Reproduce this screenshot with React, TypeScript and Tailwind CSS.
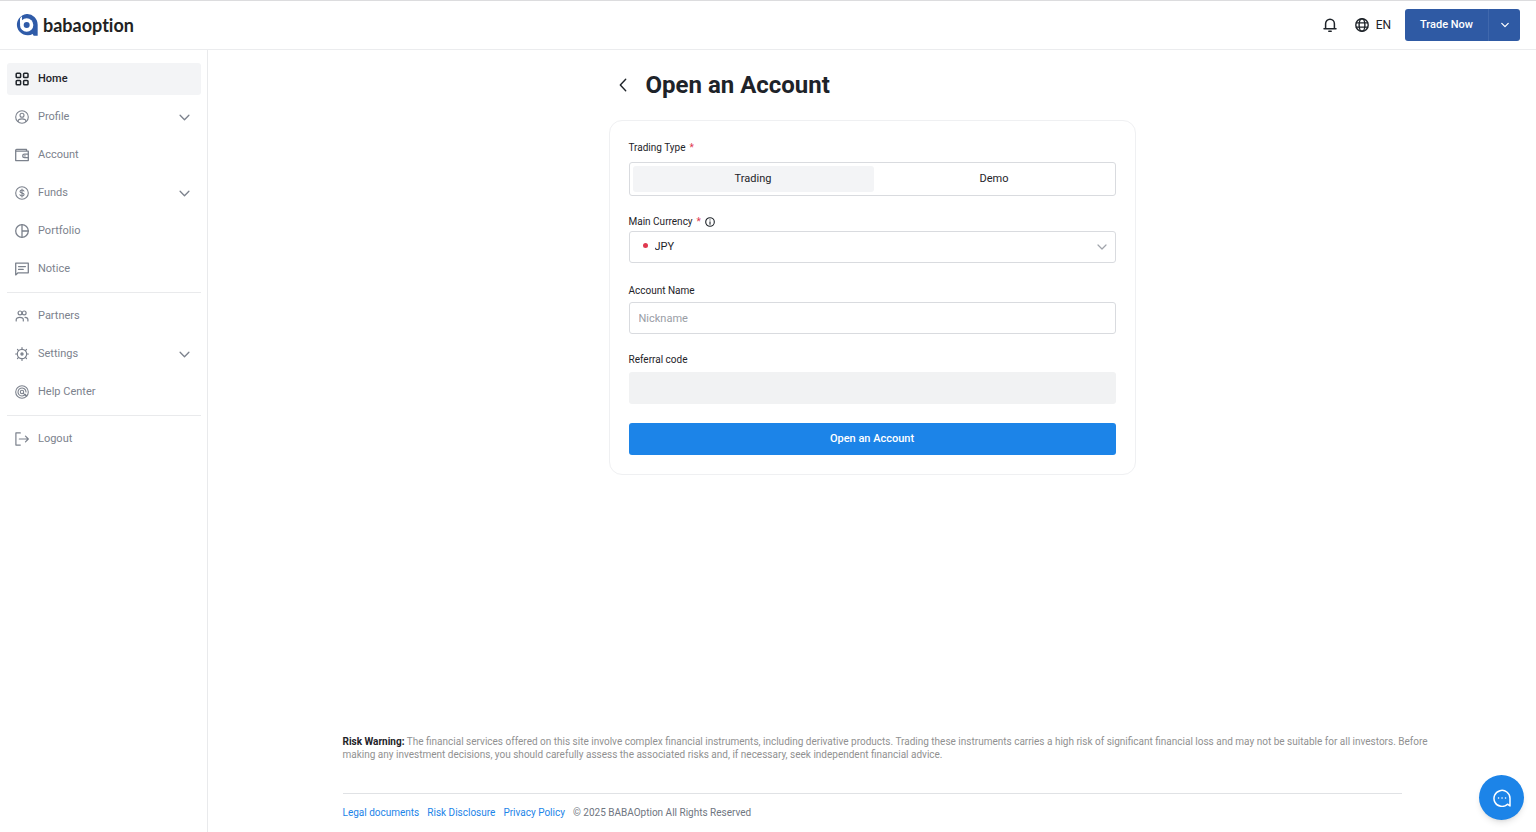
import { useState } from 'react';
import type { ReactNode } from 'react';
import { clsx } from 'clsx';

type IconProps = { children: ReactNode; size?: string; box?: string; width?: number };

function Icon({ children, size = 'size-3.5', box = '0 0 14 14', width = 1.1 }: IconProps) {
  return (
    <svg
      className={clsx(size, 'shrink-0')}
      viewBox={box}
      fill="none"
      stroke="currentColor"
      strokeWidth={width}
      strokeLinecap="round"
      strokeLinejoin="round"
      aria-hidden="true"
    >
      {children}
    </svg>
  );
}

const icons = {
  home: (
    <Icon width={1.5}>
      <rect x="1.2" y="1.2" width="4.4" height="4.4" rx="0.9" />
      <rect x="8.6" y="1.2" width="4.4" height="4.4" rx="0.9" />
      <rect x="1.2" y="8.4" width="4.4" height="4.4" rx="0.9" />
      <rect x="8.6" y="8.4" width="4.4" height="4.4" rx="0.9" />
    </Icon>
  ),
  profile: (
    <Icon>
      <circle cx="7" cy="7" r="6.3" />
      <circle cx="7" cy="5.3" r="2" />
      <path d="M3.2 11.6V11c0-1.4 1.4-2.1 3.8-2.1s3.8.7 3.8 2.1v.6" />
    </Icon>
  ),
  account: (
    <Icon width={1.3}>
      <path d="M11.5 3.2V1.4H1.6a.9.9 0 0 0 0 1.8h11.7v9.4H.7V2.3" />
      <path d="M13.3 6.1H9.5a1.8 1.8 0 0 0 0 3.6h3.8M9.7 7.9h.4" />
    </Icon>
  ),
  funds: (
    <Icon>
      <circle cx="7" cy="7" r="6.3" />
      <path d="M9 5.1C8.7 4.4 8 4 7 4c-1.2 0-2 .5-2 1.4C5 7.5 9.1 6.4 9.1 8.6 9.1 9.5 8.200 10 7 10c-1.1 0-1.9-.5-2.1-1.300M7 3v8" />
    </Icon>
  ),
  portfolio: (
    <Icon width={1.3}>
      <circle cx="7" cy="7" r="6.3" />
      <path d="M7 .7v12.6M7 7h6.3" />
    </Icon>
  ),
  notice: (
    <Icon width={1.3}>
      <path d="M.7 1.2h12.6v9.6H3L.7 12.9z" />
      <path d="M3.6 4.6h6.8M3.6 7.4h4.6" />
    </Icon>
  ),
  partners: (
    <Icon width={1.2}>
      <circle cx="5" cy="3.9" r="1.9" />
      <circle cx="9.2" cy="3.9" r="1.9" />
      <path d="M1.2 12v-1.400c0-1.300 1.300-2.200 3.500-2.200s3.600.9 3.600 2.200V12M10 8.400c1.800.1 2.900 1 2.900 2.200V12" />
    </Icon>
  ),
  settings: (
    <Icon width={1.2}>
      <circle cx="7" cy="7" r="4.7" />
      <circle cx="7" cy="7" r="1.1" fill="currentColor" />
      <path d="M7 .6v1.6M7 11.8v1.6M.6 7h1.6M11.8 7h1.6M2.500 2.500l1.100 1.100M10.400 10.400l1.100 1.100M2.500 11.500l1.100-1.100M10.400 3.600l1.100-1.100" />
    </Icon>
  ),
  help: (
    <Icon>
      <circle cx="7" cy="7" r="6.3" />
      <path d="M10.300 9.300A4 4 0 1 1 11 7M10.300 9.300l1.400 1.700" />
      <circle cx="7" cy="7" r="1.7" />
      <path d="M8.200 8.200l2.700 2.700" />
    </Icon>
  ),
  logout: (
    <Icon width={1.2}>
      <path d="M5.300.9H.9v12.2h4.400M4.300 7h9M10.500 4.200L13.300 7l-2.800 2.800" />
    </Icon>
  ),
};

type NavItem = { label: string; icon: ReactNode; expandable?: boolean; active?: boolean };

const navGroups: NavItem[][] = [
  [
    { label: 'Home', icon: icons.home, active: true },
    { label: 'Profile', icon: icons.profile, expandable: true },
    { label: 'Account', icon: icons.account },
    { label: 'Funds', icon: icons.funds, expandable: true },
    { label: 'Portfolio', icon: icons.portfolio },
    { label: 'Notice', icon: icons.notice },
  ],
  [
    { label: 'Partners', icon: icons.partners },
    { label: 'Settings', icon: icons.settings, expandable: true },
    { label: 'Help Center', icon: icons.help },
  ],
  [{ label: 'Logout', icon: icons.logout }],
];

const legalLinks = ['Legal documents', 'Risk Disclosure', 'Privacy Policy'];

function Chevron({ size, width = 1.2 }: { size: string; width?: number }) {
  return (
    <Icon size={size} box="0 0 10 10" width={width}>
      <path d="M1 3l4 4 4-4" />
    </Icon>
  );
}

function Logo() {
  return (
    <a href="#" className="flex items-center gap-[5px]">
      <svg className="size-[22px]" viewBox="0 0 66 66" aria-hidden="true">
        <path d="M32 0a32 32 0 0 1 33 32v33H53l-3-5A32 32 0 1 1 32 0z" fill="#2f5ba8" />
        <circle cx="32" cy="33" r="20" fill="#fff" />
        <path d="M12 33V13l6-6v16z" fill="#fff" />
        <circle cx="32" cy="33" r="9" fill="#2f5ba8" />
      </svg>
      <span className="font-['Lato'] text-lg leading-6 font-bold text-[#222] [font-variant-ligatures:none]">
        babaoption
      </span>
    </a>
  );
}

function Header() {
  return (
    <header className="flex h-[50px] items-center justify-between border-y border-t-[#dcdcde] border-b-[#ebecee] px-4">
      <Logo />
      <div className="flex items-center">
        <button type="button" aria-label="Notifications" className="mr-[18px]">
          <Icon width={1.5}>
            <path d="M1 10.700h12M2.600 10.700V5.700a4.400 4.400 0 0 1 8.800 0v5M5.800 13.200h2.400" />
          </Icon>
        </button>
        <button type="button" className="mr-3.5 flex items-center gap-[7px] text-xs">
          <Icon width={1.4}>
            <circle cx="7" cy="7" r="6.200" />
            <ellipse cx="7" cy="7" rx="2.900" ry="6.200" />
            <path d="M1.300 4.900h11.400M1.300 9.100h11.400" />
          </Icon>
          EN
        </button>
        <div className="flex h-8 overflow-hidden rounded-[3px] bg-[#2f5aa4] text-[11px] font-medium text-white">
          <button type="button" className="border-r border-[#4068ad] px-[15px]">Trade Now</button>
          <button type="button" aria-label="More trading options" className="flex w-[31px] items-center justify-center">
            <Chevron size="size-2" width={1.6} />
          </button>
        </div>
      </div>
    </header>
  );
}

function Sidebar() {
  return (
    <aside className="w-52 shrink-0 border-r border-[#e9eaec] pt-[13px] pr-1.5 pl-[7px]">
      <nav className="flex flex-col divide-y divide-[#e9eaec]">
        {navGroups.map((group, idx) => (
          <ul key={idx} className="flex flex-col gap-1.5 py-[7px] first:pt-0">
            {group.map((item) => (
              <li key={item.label}>
                <a
                  href="#"
                  className={clsx(
                    'flex h-8 items-center gap-[9px] rounded-[3px] pr-[11px] pl-2 text-[11px]',
                    item.active ? 'bg-[#f3f4f6] font-medium text-[#1e2329]' : 'text-[#7c828d]',
                  )}
                >
                  {item.icon}
                  <span className="flex-1">{item.label}</span>
                  {item.expandable && <Chevron size="size-[11px]" />}
                </a>
              </li>
            ))}
          </ul>
        ))}
      </nav>
    </aside>
  );
}

function Required() {
  return <span className="ml-1 text-[#e0394f]">*</span>;
}

function AccountForm() {
  const [type, setType] = useState('Trading');
  const [nickname, setNickname] = useState('');

  return (
    <form
      className="rounded-[13px] border border-[#eff0f2] px-[19px] pt-5 pb-[19px] text-[11px]"
      onSubmit={(e) => e.preventDefault()}
    >
      <fieldset>
        <legend className="text-[10px] leading-[14px]">Trading Type<Required /></legend>
        <div className="mt-[7px] flex h-[34px] rounded-[3px] border border-[#d9dbdf] py-[3px] pl-[3px]">
          {['Trading', 'Demo'].map((option) => (
            <label
              key={option}
              className={clsx(
                'flex flex-1 cursor-pointer items-center justify-center rounded-[3px]',
                type === option && 'bg-[#f3f4f6]',
              )}
            >
              <input
                type="radio"
                name="type"
                className="sr-only"
                checked={type === option}
                onChange={() => setType(option)}
              />
              {option}
            </label>
          ))}
        </div>
      </fieldset>

      <div className="mt-[19px] flex items-center text-[10px] leading-[14px]">
        <label htmlFor="currency">Main Currency<Required /></label>
        <span className="ml-1">
          <Icon size="size-2.5" box="0 0 10 10">
            <circle cx="5" cy="5" r="4.300" />
            <path d="M5 4.700v2.500M5 2.900v.1" />
          </Icon>
        </span>
      </div>
      <div className="relative mt-0.5">
        <select
          id="currency"
          className="h-8 w-full appearance-none rounded-[3px] border border-[#d9dbdf] bg-white pl-[25px]"
        >
          <option>JPY</option>
        </select>
        <span className="pointer-events-none absolute top-3 left-3.5 size-[5px] rounded-full bg-[#e0394f]" />
        <span className="pointer-events-none absolute top-[11px] right-[9px] text-[#a0a4ab]">
          <Chevron size="size-2.5" />
        </span>
      </div>

      <label htmlFor="nickname" className="mt-[21px] block text-[10px] leading-[14px]">Account Name</label>
      <input
        id="nickname"
        className="mt-1 h-8 w-full rounded-[3px] border border-[#d9dbdf] px-[9px] placeholder:text-[#999da5]"
        placeholder="Nickname"
        value={nickname}
        onChange={(e) => setNickname(e.target.value)}
      />

      <label htmlFor="referral" className="mt-[19px] block text-[10px] leading-[14px]">Referral code</label>
      <input id="referral" className="mt-[5px] h-8 w-full rounded-[3px] bg-[#f1f2f3] px-[9px]" disabled />

      <button type="submit" className="mt-[19px] h-8 w-full rounded-[3px] bg-[#1c84e8] font-medium text-white">
        Open an Account
      </button>
    </form>
  );
}

function Footer() {
  return (
    <footer className="mx-auto mt-auto w-full max-w-[1059px] pb-[13px] text-[10px] leading-[13px]">
      <p className="-mr-8 text-[#919191]">
        <strong className="font-bold text-[#1e2329]">Risk Warning:</strong> The financial services offered on this
        site involve complex financial instruments, including derivative products. Trading these instruments carries
        a high risk of significant financial loss and may not be suitable for all investors. Before making any
        investment decisions, you should carefully assess the associated risks and, if necessary, seek independent
        financial advice.
      </p>
      <div className="mt-8 flex gap-2 border-t border-[#e0e2e5] pt-3">
        {legalLinks.map((link) => (
          <a key={link} href="#" className="text-[#1c84e8]">{link}</a>
        ))}
        <span className="text-[#6f7681]">© 2025 BABAOption All Rights Reserved</span>
      </div>
    </footer>
  );
}

export default function App() {
  return (
    <div className="flex min-h-screen flex-col bg-white font-['Roboto',sans-serif] text-[#1e2329]">
      <Header />
      <div className="flex flex-1">
        <Sidebar />
        <main className="flex flex-1 flex-col px-4">
          <section className="mx-auto w-full max-w-[527px] pt-[17px] pb-8">
            <div className="mb-[17px] flex items-center gap-[15px] pl-2">
              <button type="button" aria-label="Back">
                <Icon width={1.4}>
                  <path d="M8.700 1.200L3.300 7l5.400 5.800" />
                </Icon>
              </button>
              <h1 className="text-2xl leading-9 font-bold">Open an Account</h1>
            </div>
            <AccountForm />
          </section>
          <Footer />
        </main>
      </div>
      <button
        type="button"
        aria-label="Open chat"
        className="fixed right-3 bottom-3 flex size-[45px] items-center justify-center rounded-full bg-[#1c84e8] text-white shadow-md"
      >
        <Icon size="size-[18px]" box="0 0 18 18" width={1.5}>
          <path d="M14.500 15.200A8 8 0 1 1 17 9.300V17l-2.500-1.800z" />
          <path d="M5.500 9h.1M9 9h.1M12.500 9h.1" />
        </Icon>
      </button>
    </div>
  );
}
